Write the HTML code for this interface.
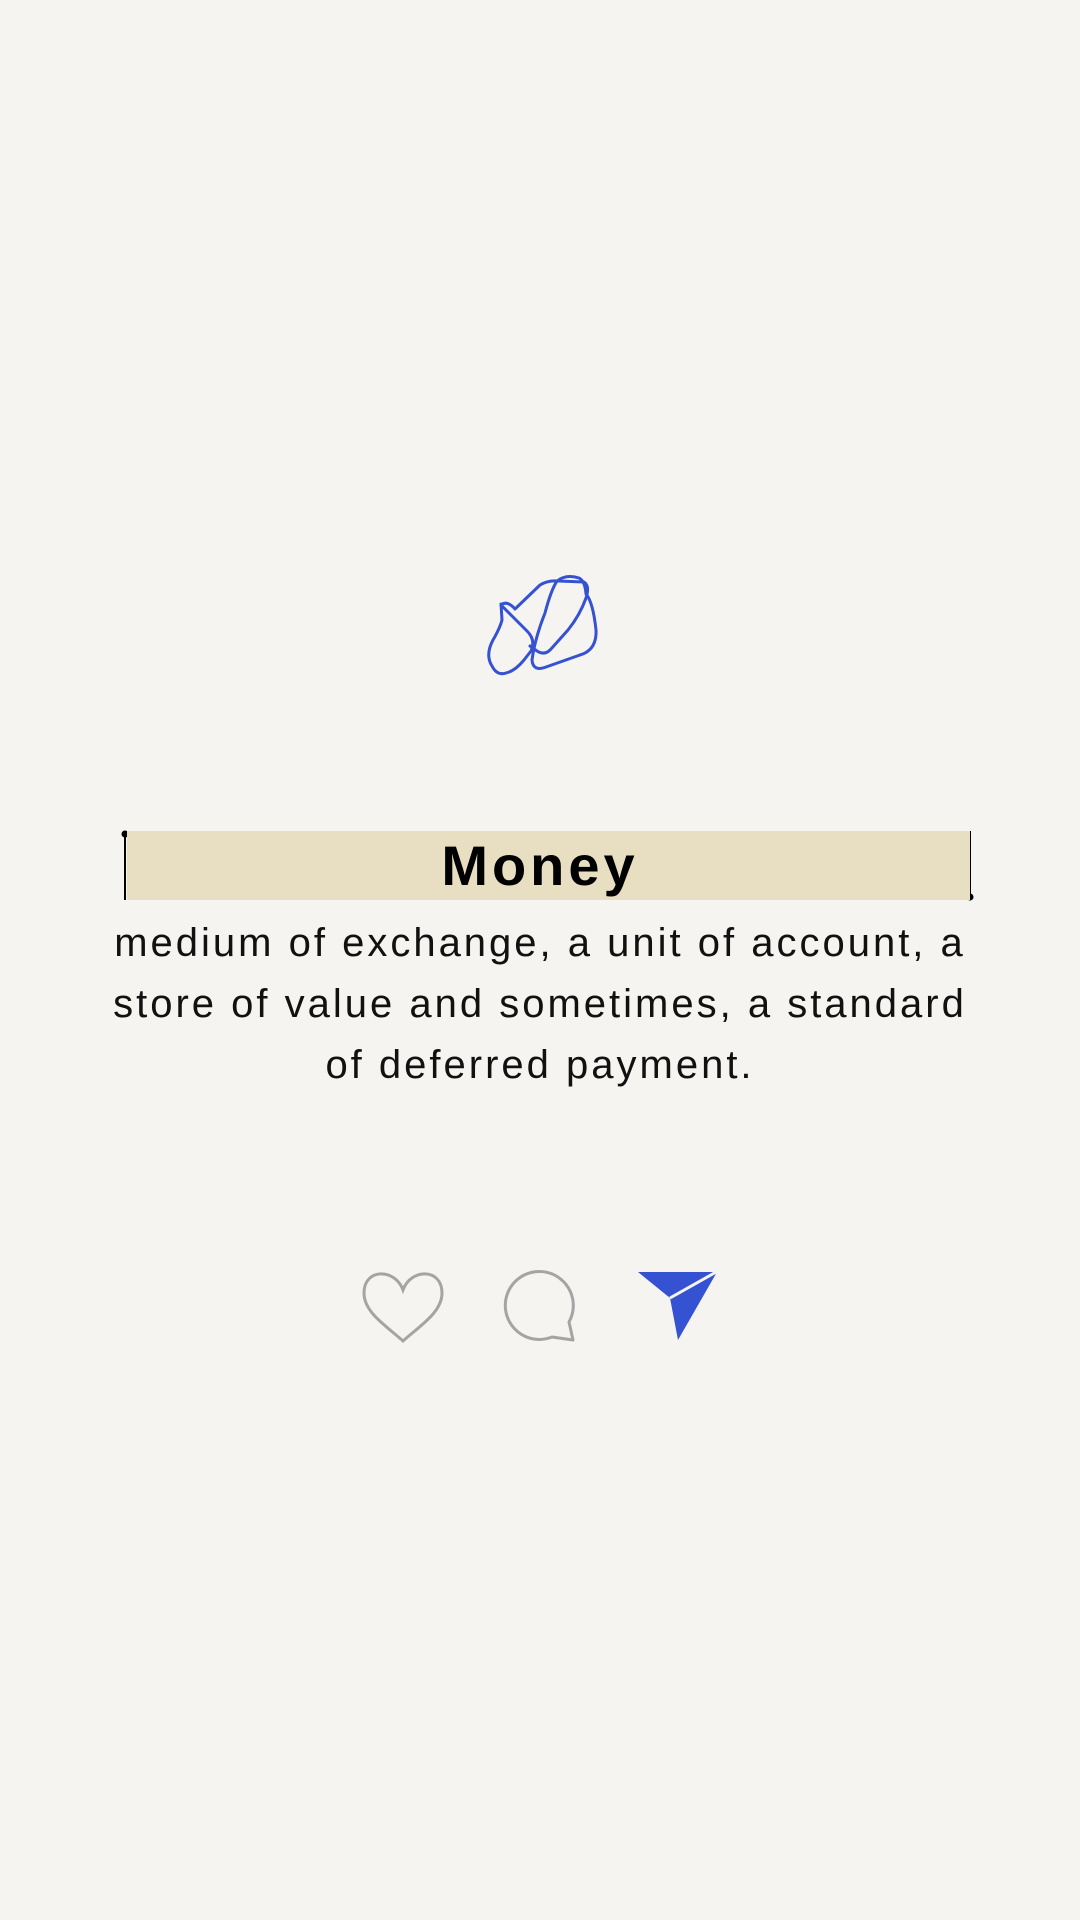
<!DOCTYPE html>
<html><head><meta charset="utf-8"><style>
html,body{margin:0;padding:0;}
body{width:1080px;height:1920px;position:relative;overflow:hidden;background:#f6f4f0;font-family:"Liberation Sans",sans-serif;}
.bar{position:absolute;left:127px;top:831px;width:843px;height:69px;background:#e8dec2;}
.title{position:absolute;left:0;width:1080px;top:831px;height:69px;line-height:69px;text-align:center;font-weight:bold;font-size:56px;letter-spacing:4px;color:#000;}
.body{position:absolute;left:0;width:1080px;top:913px;text-align:center;font-size:40px;line-height:61px;letter-spacing:3px;color:#111;}
</style></head><body>
<svg style="position:absolute;left:0;top:0" width="1080" height="1920">
<g fill="none" stroke="#3452d1" stroke-width="3" stroke-linecap="round" stroke-linejoin="round">
<path d="M501 604 L502 620 Q500 628 493 640 Q485 655 492 666 Q497 676 506 673 Q515 671 524 660 L531 651 Q536 640 527 631 L513 617 L501 605 Q507 600 515 609 L540 585 Q548 580 558 581 L584 582 Q590 586 586 598 Q580 615 568 630 L551 649 Q545 656 537 651 L530 646"/>
<path d="M557 581 Q566 574 579 578 Q585 581 586 594 Q593 602 596 630 Q597 650 580 655 L546 667 Q533 672 532 660 Q535 638 545 613 Q551 590 557 581"/>
</g>
<line x1="125" y1="834" x2="125" y2="900" stroke="#000" stroke-width="2"/>
<circle cx="125" cy="834" r="3.5" fill="#000"/>
<line x1="970" y1="831" x2="970" y2="896" stroke="#000" stroke-width="2"/>
<circle cx="970" cy="897" r="3.5" fill="#000"/>
<path d="M403 1290 C395 1268 364 1268 364 1293 C364 1312 385 1325 403 1341 C421 1325 442 1312 442 1293 C442 1268 411 1268 403 1290 Z" fill="none" stroke="#a4a4a4" stroke-width="3"/>
<path d="M569 1322 A34 34 0 1 0 552 1337 L573 1340 Z" fill="none" stroke="#a4a4a4" stroke-width="3" stroke-linejoin="round"/>
<path d="M638 1272 L717 1272 L678 1340 L670 1298 Z" fill="#3452d1"/>
<line x1="670" y1="1298" x2="718" y2="1271" stroke="#f6f4f0" stroke-width="3"/>
</svg>
<div class="bar"></div>
<div class="title">Money</div>
<div class="body">medium of exchange, a unit of account, a<br>store of value and sometimes, a standard<br>of deferred payment.</div>
</body></html>
